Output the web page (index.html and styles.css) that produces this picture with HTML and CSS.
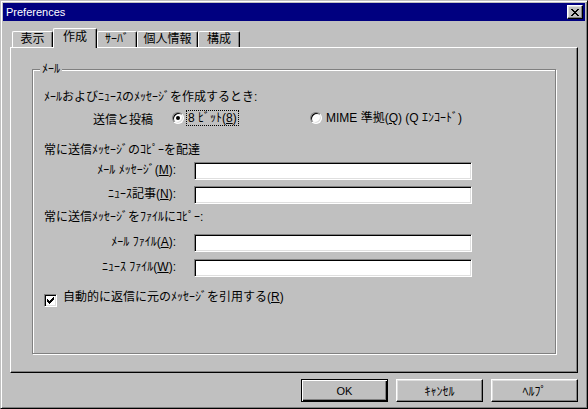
FILE: index.html
```html
<!DOCTYPE html>
<html lang="ja">
<head>
<meta charset="utf-8">
<title>Preferences</title>
<link rel="stylesheet" href="styles.css">
</head>
<body>
<div class="window">
  <div class="titlebar">
    <span class="title">Preferences</span>
    <button class="close" aria-label="Close"><svg width="8" height="7" viewBox="0 0 8 7" shape-rendering="crispEdges"><path d="M0 0h2v1H0zM6 0h2v1H6zM1 1h2v1H1zM5 1h2v1H5zM2 2h4v1H2zM3 3h2v1H3zM2 4h4v1H2zM1 5h2v1H1zM5 5h2v1H5zM0 6h2v1H0zM6 6h2v1H6z"/></svg></button>
  </div>
  <div class="dialog">
    <div class="tabs">
      <div class="tab tab-a">表示</div>
      <div class="tab tab-b active">作成</div>
      <div class="tab tab-c">ｻｰﾊﾞ</div>
      <div class="tab tab-d">個人情報</div>
      <div class="tab tab-e">構成</div>
    </div>
    <div class="panel">
      <fieldset class="group">
        <legend>ﾒｰﾙ</legend>
        <div class="group-body">
          <p class="line l1">ﾒｰﾙおよびﾆｭｰｽのﾒｯｾｰｼﾞを作成するとき:</p>
          <div class="radio-row">
            <span class="radio-caption">送信と投稿</span>
            <label class="option opt-first"><span class="radio checked"></span><span class="opt-text focus">8 ﾋﾞｯﾄ(<u>8</u>)</span></label>
            <label class="option"><span class="radio"></span><span class="opt-text">MIME 準拠(<u>Q</u>) (Q ｴﾝｺｰﾄﾞ)</span></label>
          </div>
          <p class="line l3">常に送信ﾒｯｾｰｼﾞのｺﾋﾟｰを配達</p>
          <div class="fields f1">
            <span class="field-label">ﾒｰﾙ ﾒｯｾｰｼﾞ(<u>M</u>):</span><span class="textbox"></span>
            <span class="field-label">ﾆｭｰｽ記事(<u>N</u>):</span><span class="textbox"></span>
          </div>
          <p class="line l6">常に送信ﾒｯｾｰｼﾞをﾌｧｲﾙにｺﾋﾟｰ:</p>
          <div class="fields f2">
            <span class="field-label">ﾒｰﾙ ﾌｧｲﾙ(<u>A</u>):</span><span class="textbox"></span>
            <span class="field-label">ﾆｭｰｽ ﾌｧｲﾙ(<u>W</u>):</span><span class="textbox"></span>
          </div>
          <div class="check-row">
            <span class="checkbox"><svg width="7" height="7" viewBox="0 0 7 7" shape-rendering="crispEdges"><path d="M6 0h1v1H6zM5 1h2v1H5zM0 2h1v1H0zM4 2h3v1H4zM0 3h2v1H0zM3 3h3v1H3zM0 4h5v1H0zM1 5h3v1H1zM2 6h1v1H2z"/></svg></span>
            <span class="check-text">自動的に返信に元のﾒｯｾｰｼﾞを引用する(<u>R</u>)</span>
          </div>
        </div>
      </fieldset>
    </div>
    <div class="buttons">
      <button class="btn btn-default latin">OK</button>
      <button class="btn">ｷｬﾝｾﾙ</button>
      <button class="btn">ﾍﾙﾌﾟ</button>
    </div>
  </div>
</div>
</body>
</html>
```
FILE: styles.css
```css
* { box-sizing: border-box; }
html, body { margin: 0; padding: 0; }
body {
  width: 588px;
  height: 409px;
  overflow: hidden;
  background: #c0c0c0;
  color: #000;
  font-family: "Liberation Sans", "Noto Sans CJK JP", sans-serif;
  font-size: 12px;
}
.window {
  width: 588px;
  height: 409px;
  display: flex;
  flex-direction: column;
  background: #c0c0c0;
  border: 1px solid;
  border-color: #c0c0c0 #000 #000 #c0c0c0;
  box-shadow: inset 1px 1px 0 #fff, inset -1px -1px 0 #808080;
  padding: 2px;
}
.titlebar {
  height: 18px;
  flex: none;
  background: #000080;
  color: #fff;
  display: flex;
  align-items: center;
  justify-content: space-between;
  padding: 0 2px 0 3px;
}
.title {
  font-family: "Liberation Sans", sans-serif;
  font-size: 11px;
  line-height: 18px;
}
.close {
  width: 16px;
  height: 14px;
  margin: 0;
  padding: 0;
  background: #c0c0c0;
  border: 1px solid;
  border-color: #fff #000 #000 #fff;
  box-shadow: inset -1px -1px 0 #808080, inset 1px 1px 0 #dfdfdf;
  display: flex;
  align-items: center;
  justify-content: center;
}
.close svg, .checkbox svg { display: block; fill: #000; }

.dialog {
  flex: 1;
  display: flex;
  flex-direction: column;
  padding: 7px 7px 0 7px;
}
.tabs {
  display: flex;
  align-items: flex-end;
  height: 19px;
  margin-left: 2px;
}
.tab {
  height: 16px;
  border: 1px solid;
  border-bottom: none;
  border-color: #fff #000 #000 #fff;
  border-radius: 2px 2px 0 0;
  box-shadow: inset -1px 0 0 #808080;
  text-align: center;
  line-height: 15px;
  background: #c0c0c0;
}
.tab.active {
  height: 20px;
  margin-bottom: -1px;
  position: relative;
  z-index: 1;
  line-height: 16px;
}
.tab-a { width: 41px; }
.tab-b { width: 44px; }
.tab-c { width: 40px; }
.tab-d { width: 61px; }
.tab-e { width: 42px; }

.panel {
  height: 326px;
  flex: none;
  display: flex;
  flex-direction: column;
  border: 1px solid;
  border-color: #fff #000 #000 #fff;
  box-shadow: inset -1px -1px 0 #808080;
  padding: 15px 21px 18px 21px;
}
.group {
  flex: 1;
  min-width: 0;
  margin: 0;
  padding: 0;
  border: 1px solid #808080;
  box-shadow: inset 1px 1px 0 #fff, 1px 1px 0 #fff;
}
.group legend {
  margin-left: 7px;
  padding: 0 2px;
  line-height: 12px;
  background: #c0c0c0;
}
.group-body {
  padding: 14px 0 0 11px;
  display: flex;
  flex-direction: column;
}
.line {
  margin: 0;
  line-height: 16px;
  white-space: nowrap;
}
.l3 { margin-top: 16px; }
.l6 { margin-top: 5px; }

.radio-row {
  margin-top: 5px;
  height: 16px;
  display: flex;
  align-items: center;
  padding-left: 49px;
  white-space: nowrap;
}
.radio-caption { width: 79px; }
.option {
  display: flex;
  align-items: center;
}
.opt-first { width: 138px; }
.radio {
  width: 12px;
  height: 12px;
  flex: none;
  border-radius: 50%;
  background: #fff;
  border: 1px solid;
  border-color: #808080 #fff #fff #808080;
  box-shadow: inset 1px 1px 0 #000, inset -1px -1px 0 #dfdfdf;
  display: flex;
  align-items: center;
  justify-content: center;
}
.radio.checked::after {
  content: "";
  width: 4px;
  height: 4px;
  border-radius: 50%;
  background: #000;
}
.opt-text {
  margin-left: 4px;
  line-height: 14px;
}
.focus {
  margin-left: 3px;
  padding: 0 1px;
  outline: 1px dotted #000;
  outline-offset: 0;
}

.fields {
  display: grid;
  grid-template-columns: 132px 278px;
  column-gap: 18px;
  align-items: start;
}
.f1 { margin-top: 4px; row-gap: 6px; }
.f2 { margin-top: 9px; row-gap: 7px; }
.field-label {
  text-align: right;
  line-height: 14px;
  padding-top: 1px;
  white-space: nowrap;
}
.textbox {
  display: block;
  height: 18px;
  background: #fff;
  border: 1px solid;
  border-color: #808080 #fff #fff #808080;
  box-shadow: inset 1px 1px 0 #000, inset -1px -1px 0 #dfdfdf;
}

.check-row {
  margin-top: 12px;
  display: flex;
  align-items: flex-start;
  white-space: nowrap;
}
.checkbox {
  width: 13px;
  height: 13px;
  flex: none;
  margin-top: 5px;
  background: #fff;
  border: 1px solid;
  border-color: #808080 #fff #fff #808080;
  box-shadow: inset 1px 1px 0 #000, inset -1px -1px 0 #dfdfdf;
  display: flex;
  align-items: center;
  justify-content: center;
}
.check-text {
  margin-left: 6px;
  line-height: 16px;
}

.buttons {
  margin-top: 6px;
  display: flex;
  justify-content: flex-end;
  gap: 8px;
}
.btn {
  width: 87px;
  height: 23px;
  margin: 0;
  padding: 0;
  background: #c0c0c0;
  color: #000;
  font-family: "Liberation Sans", "Noto Sans CJK JP", sans-serif;
  font-size: 12px;
  border: 1px solid;
  border-color: #fff #000 #000 #fff;
  box-shadow: inset -1px -1px 0 #808080, inset 1px 1px 0 #dfdfdf;
}
.btn.latin { font-size: 11px; }
.btn-default {
  border-color: #000;
  box-shadow: inset 1px 1px 0 #fff, inset -1px -1px 0 #000, inset -2px -2px 0 #808080;
}
```
